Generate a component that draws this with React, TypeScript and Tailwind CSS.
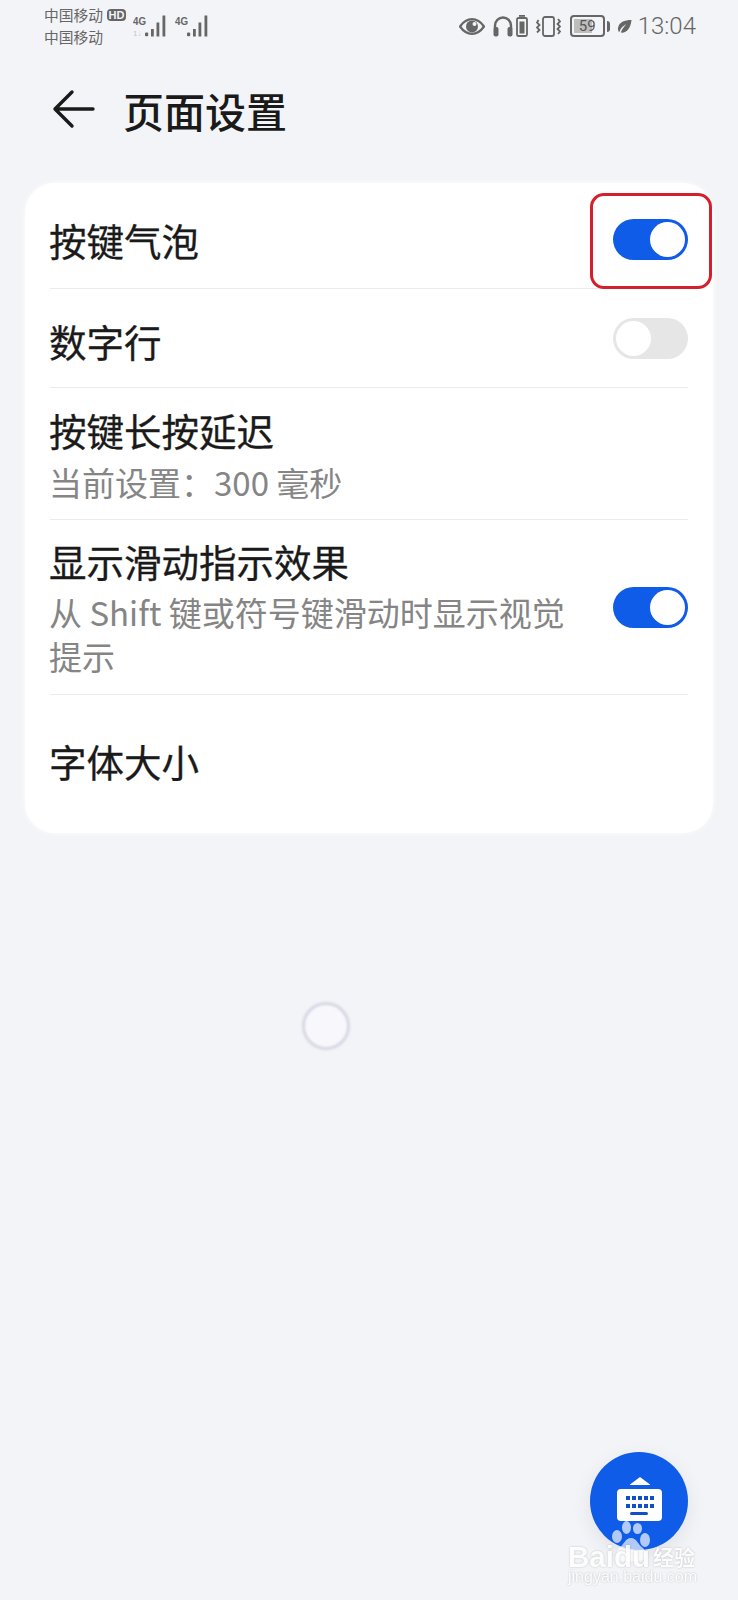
const Signal = ({ sub }: { sub?: boolean }) => (
  <svg width="35" height="22" viewBox="0 0 35 22" className="block">
    <text x="0" y="9.500" fontSize="11" fontWeight="700" fill="#666" textLength="13" lengthAdjust="spacingAndGlyphs" fontFamily="'Liberation Sans', sans-serif">4G</text>
    {sub && <text x="0" y="21" fontSize="8" fill="#c4c4c4" fontFamily="'Liberation Sans', sans-serif">1↓</text>}
    <g fill="#666">
      <rect x="12" y="17.500" width="3.200" height="3.800" rx="1" />
      <rect x="18" y="14" width="2.800" height="7.500" />
      <rect x="23.500" y="7.500" width="2.800" height="14" />
      <rect x="29.500" y="0.500" width="2.800" height="21" />
    </g>
  </svg>
);

const Toggle = ({ on }: { on: boolean }) =>
  on ? (
    <div className="flex h-[41px] w-[75px] items-center justify-end rounded-full bg-[#0f5ce8] pr-[3px]">
      <div className="h-[35px] w-[35px] rounded-full bg-white" />
    </div>
  ) : (
    <div className="flex h-[41px] w-[75px] items-center justify-start rounded-full bg-[#e6e6e6] pl-[3px]">
      <div className="h-[35px] w-[35px] rounded-full bg-white" />
    </div>
  );

const Sep = () => <div className="mx-[25px] h-px bg-[#ebebeb]" />;

const StatusIcons = () => (
  <div className="flex items-center">
    <svg width="26" height="17" viewBox="0 0 26 17">
      <path d="M1 8.500C4.500 3.500 8.500 1.200 13 1.200S21.500 3.500 25 8.500C21.500 13.500 17.500 15.800 13 15.800S4.500 13.500 1 8.500Z" fill="none" stroke="#666" strokeWidth="2.200" />
      <circle cx="13" cy="8.500" r="6" fill="#666" />
      <circle cx="15.500" cy="6" r="2" fill="#f3f4f7" />
    </svg>
    <svg width="20" height="21" viewBox="0 0 20 21" className="ml-[8px]">
      <path d="M2 13V9.500a8 8 0 0 1 16 0V13" fill="none" stroke="#666" strokeWidth="2.400" />
      <rect x="0.500" y="11" width="5" height="9.500" rx="2" fill="#666" />
      <rect x="14.500" y="11" width="5" height="9.500" rx="2" fill="#666" />
    </svg>
    <svg width="12" height="22" viewBox="0 0 12 22" className="ml-[3px]">
      <rect x="3" y="0" width="6" height="1.800" fill="#666" />
      <rect x="1" y="3" width="10" height="18" rx="1.500" fill="none" stroke="#666" strokeWidth="1.800" />
      <rect x="3.500" y="6.500" width="5" height="12" fill="#666" />
    </svg>
    <svg width="25" height="21" viewBox="0 0 25 21" className="ml-[8px]">
      <rect x="7" y="1" width="11" height="19" rx="2" fill="none" stroke="#666" strokeWidth="1.800" />
      <path d="M2.500 4L1 6.500L3.500 9L1 11.500L3.500 14L1 16.500" fill="none" stroke="#666" strokeWidth="1.800" />
      <path d="M22 3L24 5.500L21.500 8L24 10.500L21.500 13L24 15.500L22 18" fill="none" stroke="#666" strokeWidth="1.800" />
    </svg>
    <div className="relative ml-[9px] flex h-[22px] w-[35px] items-center justify-center overflow-hidden rounded-[4px] border-2 border-[#666]">
      <div className="absolute bottom-[2px] left-[2px] top-[2px] w-[18px] bg-[#bdbdbd]" />
      <span className="relative font-['Roboto',sans-serif] text-[15px] leading-none text-[#555]">59</span>
    </div>
    <div className="ml-[2px] h-[11px] w-[3px] rounded-r-sm bg-[#666]" />
    <svg width="15" height="15" viewBox="0 0 16 16" className="ml-[7px]">
      <path d="M15.500 1C8 1 2 3 1 10C1 12 1.500 13 2.500 14C4 9 7 7 10 5.500C7.500 8 5.500 10.500 4 14.500C10 15.500 14.500 10 15.500 1Z" fill="#666" />
    </svg>
    <span className="ml-[6px] font-['Roboto',sans-serif] text-[24px] font-light leading-none text-[#666]">13:04</span>
  </div>
);

export default function App() {
  return (
    <div className="relative h-[1600px] w-[738px] overflow-hidden bg-[#f3f4f7] font-['Noto_Sans_CJK_SC',sans-serif] text-[#1a1a1a]">
      {/* status bar */}
      <div className="flex h-[62px] items-start justify-between pl-[44px] pr-[42px] pt-[4px]">
        <div className="flex items-start">
          <div className="flex w-[84px] flex-col text-[14.750px] leading-[22px] text-[#666]">
            <div className="flex items-center">
              <span>中国移动</span>
              <span className="ml-[4px] flex h-[12px] w-[19px] items-center justify-center rounded-[4px] bg-[#666] font-['Liberation_Sans',sans-serif] text-[11px] font-bold leading-none text-[#f3f4f7]">HD</span>
            </div>
            <span>中国移动</span>
          </div>
          <div className="ml-[5px] mt-[11px]"><Signal sub /></div>
          <div className="ml-[7px] mt-[11px]"><Signal /></div>
        </div>
        <div className="mt-[10px]"><StatusIcons /></div>
      </div>

      {/* header */}
      <div className="flex h-[121px] items-start pl-[52px] pt-[22px]">
        <svg width="44" height="40" viewBox="0 0 44 40" className="mt-[5px] block">
          <path d="M41 20H3M20 3L3 20L20 37" fill="none" stroke="#1a1a1a" strokeWidth="3.400" strokeLinecap="round" strokeLinejoin="round" />
        </svg>
        <h1 className="ml-[27px] text-[41px] font-medium leading-[52px]">页面设置</h1>
      </div>

      {/* card */}
      <div className="mx-[25px] h-[650px] rounded-[30px] bg-white text-[37.500px] shadow-[0_0_6px_rgba(255,255,255,0.8)] [-webkit-text-stroke:0.3px_currentColor]">
        <div className="flex h-[105px] items-center justify-between px-[25px] pt-[8px]">
          <span className="-ml-[1px] leading-[48px]">按键气泡</span>
          <Toggle on />
        </div>
        <Sep />
        <div className="flex h-[98px] items-center justify-between px-[25px]">
          <span className="-ml-[1px] mt-[6px] leading-[48px]">数字行</span>
          <Toggle on={false} />
        </div>
        <Sep />
        <div className="flex h-[131px] flex-col pl-[24px] pt-[18px]">
          <span className="leading-[48px]">按键长按延迟</span>
          <span className="mt-[6px] text-[33px] leading-[44px] text-[#858585] [-webkit-text-stroke:0]">当前设置：300 毫秒</span>
        </div>
        <Sep />
        <div className="flex h-[174px] items-start justify-between pl-[24px] pr-[25px] pt-[17px]">
          <div className="w-[528px]">
            <div className="leading-[48px]">显示滑动指示效果</div>
            <div className="mt-[5px] text-[33px] leading-[44px] text-[#858585] [-webkit-text-stroke:0]">从 Shift 键或符号键滑动时显示视觉提示</div>
          </div>
          <div className="mt-[50px]"><Toggle on /></div>
        </div>
        <Sep />
        <div className="flex h-[138px] items-center pb-[7px] pl-[24px]">
          <span className="leading-[48px]">字体大小</span>
        </div>
      </div>

      {/* loading spinner */}
      <div className="ml-[302px] mt-[169px] h-[48px] w-[48px] rounded-full border-[3px] border-[#d6d7e4] bg-[#f8f8fc] blur-[1px]" />

      {/* annotation */}
      <div className="absolute left-[590px] top-[193px] h-[96px] w-[122px] rounded-[14px] border-[3px] border-[#d4202c]" />

      {/* floating button */}
      <div className="absolute left-[590px] top-[1452px] flex h-[98px] w-[98px] items-center justify-center rounded-full bg-[#0f5ce8] shadow-[0_6px_20px_rgba(0,0,0,0.08)]">
        <svg width="48" height="48" viewBox="0 0 48 48">
          <path d="M25 0L35 7.500Q35.500 8 34 8H16Q14.500 8 15 7.500Z" fill="#fff" />
          <rect x="2" y="12" width="45" height="32" rx="4" fill="#fff" />
          <g fill="#0f4fc8">
            <rect x="11" y="19" width="4" height="4" /><rect x="17" y="19" width="4" height="4" /><rect x="23" y="19" width="4" height="4" /><rect x="29" y="19" width="4" height="4" /><rect x="35" y="19" width="4" height="4" />
            <rect x="11" y="27" width="4" height="4" /><rect x="17" y="27" width="4" height="4" /><rect x="23" y="27" width="4" height="4" /><rect x="29" y="27" width="4" height="4" /><rect x="35" y="27" width="4" height="4" />
            <rect x="15" y="35" width="18" height="3" rx="1.500" />
          </g>
        </svg>
      </div>

      {/* watermark */}
      <div className="absolute left-[568px] top-[1520px] h-[70px] w-[150px] font-['Liberation_Sans',sans-serif]">
        <svg width="38" height="42" viewBox="0 0 38 42" className="absolute left-[44px] top-0">
          <g fill="#fff" fillOpacity="0.68">
            <ellipse cx="5" cy="16.500" rx="5" ry="6.500" />
            <ellipse cx="14.500" cy="7.500" rx="4.500" ry="6.500" />
            <ellipse cx="25.500" cy="8.500" rx="4.500" ry="5.500" />
            <ellipse cx="33" cy="20" rx="5" ry="7" />
            <path d="M19 18C25 18 26 25 31 28C36 33 33 42 26 41H12C5 42 2 33 7 28C12 25 13 18 19 18Z" />
          </g>
        </svg>
        <span className="absolute left-0 top-[23px] text-[29.500px] font-bold leading-[27px] text-white opacity-80 [text-shadow:0_0_2px_rgba(0,0,0,0.3)]">Baidu</span>
        <span className="absolute left-[85px] top-[23px] font-['Noto_Sans_CJK_SC',sans-serif] text-[21px] font-bold leading-[26px] text-white opacity-80 [text-shadow:0_0_2px_rgba(0,0,0,0.3)]">经验</span>
        <span className="absolute left-0 top-[50px] text-[16px] leading-[14px] text-white opacity-80 [text-shadow:0_0_2px_rgba(0,0,0,0.3)]">jingyan.baidu.com</span>
      </div>
    </div>
  );
}
